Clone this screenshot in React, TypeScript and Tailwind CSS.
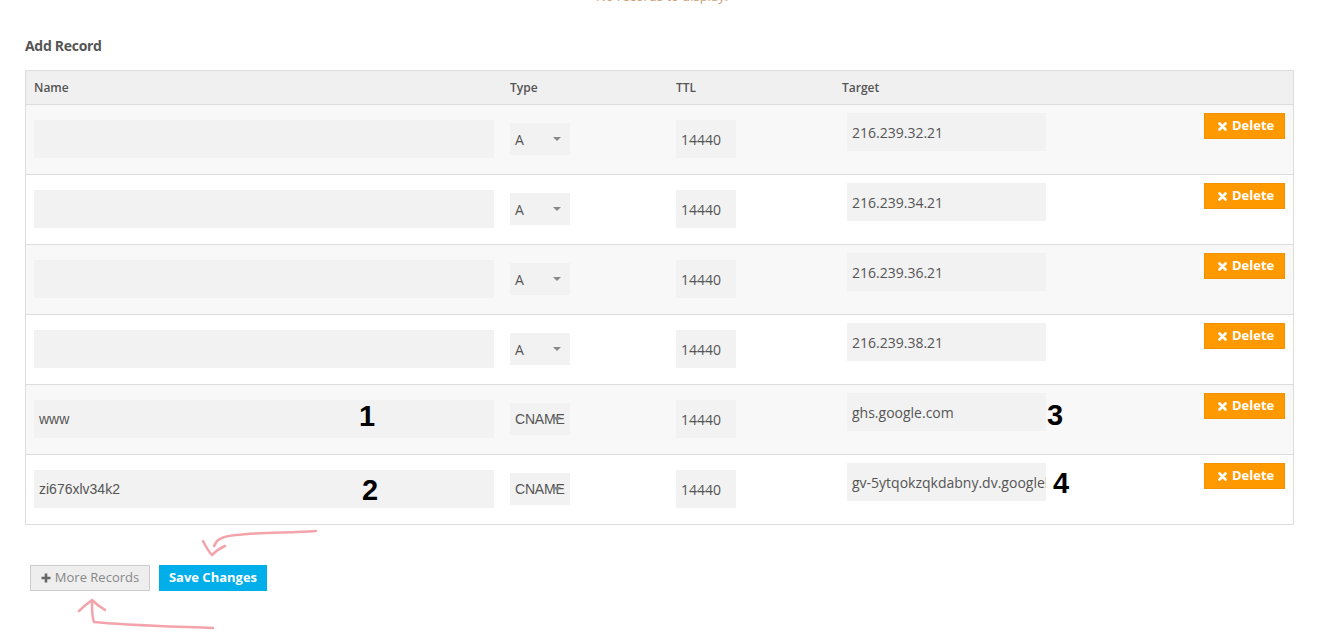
type DnsRecord = {
  name: string;
  type: string;
  ttl: string;
  target: string;
};

const records: DnsRecord[] = [
  { name: "", type: "A", ttl: "14440", target: "216.239.32.21" },
  { name: "", type: "A", ttl: "14440", target: "216.239.34.21" },
  { name: "", type: "A", ttl: "14440", target: "216.239.36.21" },
  { name: "", type: "A", ttl: "14440", target: "216.239.38.21" },
  { name: "www", type: "CNAME", ttl: "14440", target: "ghs.google.com" },
  {
    name: "zi676xlv34k2",
    type: "CNAME",
    ttl: "14440",
    target: "gv-5ytqokzqkdabny.dv.googlehosted.com",
  },
];

const TimesIcon = () => (
  <svg width="9" height="9" viewBox="0 0 9 9" className="shrink-0">
    <path
      d="M1.5 1.5 L7.5 7.5 M7.5 1.5 L1.5 7.5"
      stroke="currentColor"
      strokeWidth="2.6"
      strokeLinecap="round"
    />
  </svg>
);

const PlusIcon = () => (
  <svg width="10" height="10" viewBox="0 0 10 10" className="shrink-0">
    <path d="M5 0.5 V9.5 M0.5 5 H9.5" stroke="#666" strokeWidth="2.6" />
  </svg>
);

const RecordRow = ({ rec, index }: { rec: DnsRecord; index: number }) => {
  return (
    <div
      className={`grid h-[70px] grid-cols-[476px_166px_166px_1fr] border-t border-[#dddddd] pl-2 pr-2 ${
        index % 2 === 0 ? "bg-[#f8f8f8]" : "bg-white"
      }`}
    >
      <div className="pt-[15px]">
        <div className="flex h-[38px] w-[460px] items-center bg-[#f2f2f2] px-[5px] font-['Liberation_Sans',Arial,sans-serif] text-[14px] text-[#555]">
          {rec.name}
        </div>
      </div>
      <div className="pt-[18px]">
        <div className="relative flex h-[32px] w-[60px] items-center overflow-hidden bg-[#f2f2f2] pl-[5px] text-[14px] text-[#555]">
          <span
            className={
              rec.type === "A"
                ? "font-['Open_Sans',sans-serif]"
                : "font-['Liberation_Sans',Arial,sans-serif] tracking-[-0.2px]"
            }
          >
            {rec.type}
          </span>
          <span className="absolute left-[43px] top-[14px] h-0 w-0 border-x-[4px] border-t-[4px] border-x-transparent border-t-[#888]" />
        </div>
      </div>
      <div className="pt-[15px]">
        <div className="flex h-[38px] w-[60px] items-center bg-[#f2f2f2] px-[5px] font-['Open_Sans',sans-serif] text-[14px] text-[#555]">
          {rec.ttl}
        </div>
      </div>
      <div className="flex items-start justify-between pt-[8px]">
        <div className="ml-[5px] flex h-[38px] w-[199px] items-center overflow-hidden whitespace-nowrap bg-[#f2f2f2] pl-[5px] font-['Open_Sans',sans-serif] text-[14px] text-[#555]">
          <span className="overflow-hidden">{rec.target}</span>
        </div>
        <button className="flex h-[26px] w-[81px] items-center gap-[5px] border border-[#f29100] bg-[#ff9900] pl-[13px] font-['Open_Sans',sans-serif] text-[13px] font-bold text-white">
          <TimesIcon />
          Delete
        </button>
      </div>
    </div>
  );
};

export default function App() {
  return (
    <div className="relative min-h-screen overflow-hidden bg-white font-['Open_Sans',sans-serif]">
      <p className="-mt-[13px] text-center text-[13px] leading-[18px] text-[#c9a277]">
        No records to display.
      </p>

      <div className="px-[25px]">
        <h2 className="mt-[32px] text-[14px] font-bold leading-[18px] tracking-[-0.3px] text-[#555]">
          Add Record
        </h2>

        <div className="mt-[15px] w-[1269px] border border-[#dddddd]">
          <div className="grid h-[33px] grid-cols-[476px_166px_166px_1fr] items-center bg-[#f0f0f0] pl-2 text-[12px] font-semibold text-[#555]">
            <span>Name</span>
            <span>Type</span>
            <span>TTL</span>
            <span>Target</span>
          </div>
          {records.map((rec, i) => (
            <RecordRow key={i} rec={rec} index={i} />
          ))}
        </div>

        <div className="ml-[5px] mt-[40px] flex gap-[9px]">
          <button className="flex h-[26px] w-[120px] items-center justify-center gap-[4px] border border-[#cccccc] bg-[#eeeeee] text-[13px] text-[#888]">
            <PlusIcon />
            More Records
          </button>
          <button className="flex h-[26px] w-[108px] items-center justify-center bg-[#00aeea] text-[13px] font-bold text-white">
            Save Changes
          </button>
        </div>
      </div>

      {/* annotation marks drawn over the screenshot */}
      <span className="absolute left-[359px] top-[398px] font-['Liberation_Sans',Arial,sans-serif] text-[29px] font-bold leading-[36px] text-black">
        1
      </span>
      <span className="absolute left-[362px] top-[472px] font-['Liberation_Sans',Arial,sans-serif] text-[29px] font-bold leading-[36px] text-black">
        2
      </span>
      <span className="absolute left-[1047px] top-[397px] font-['Liberation_Sans',Arial,sans-serif] text-[29px] font-bold leading-[36px] text-black">
        3
      </span>
      <span className="absolute left-[1053px] top-[465px] font-['Liberation_Sans',Arial,sans-serif] text-[29px] font-bold leading-[36px] text-black">
        4
      </span>

      <svg
        className="pointer-events-none absolute left-0 top-0"
        width="1324"
        height="640"
        fill="none"
        stroke="#f4a3ab"
        strokeWidth="2.5"
        strokeLinecap="round"
        strokeLinejoin="round"
      >
        <path d="M316 531 C290 533 260 532 236 535 C225 536 220 538 217 541 L214 546" />
        <path d="M203 541 C206 547 209 552 212 555 C216 551 220 548 225 546" />
        <path d="M79 611 C84 606 88 603 92 600 C96 604 100 607 105 610" />
        <path d="M92 603 C92 610 92 617 94 622 C120 625 160 626 213 628" />
      </svg>
    </div>
  );
}
